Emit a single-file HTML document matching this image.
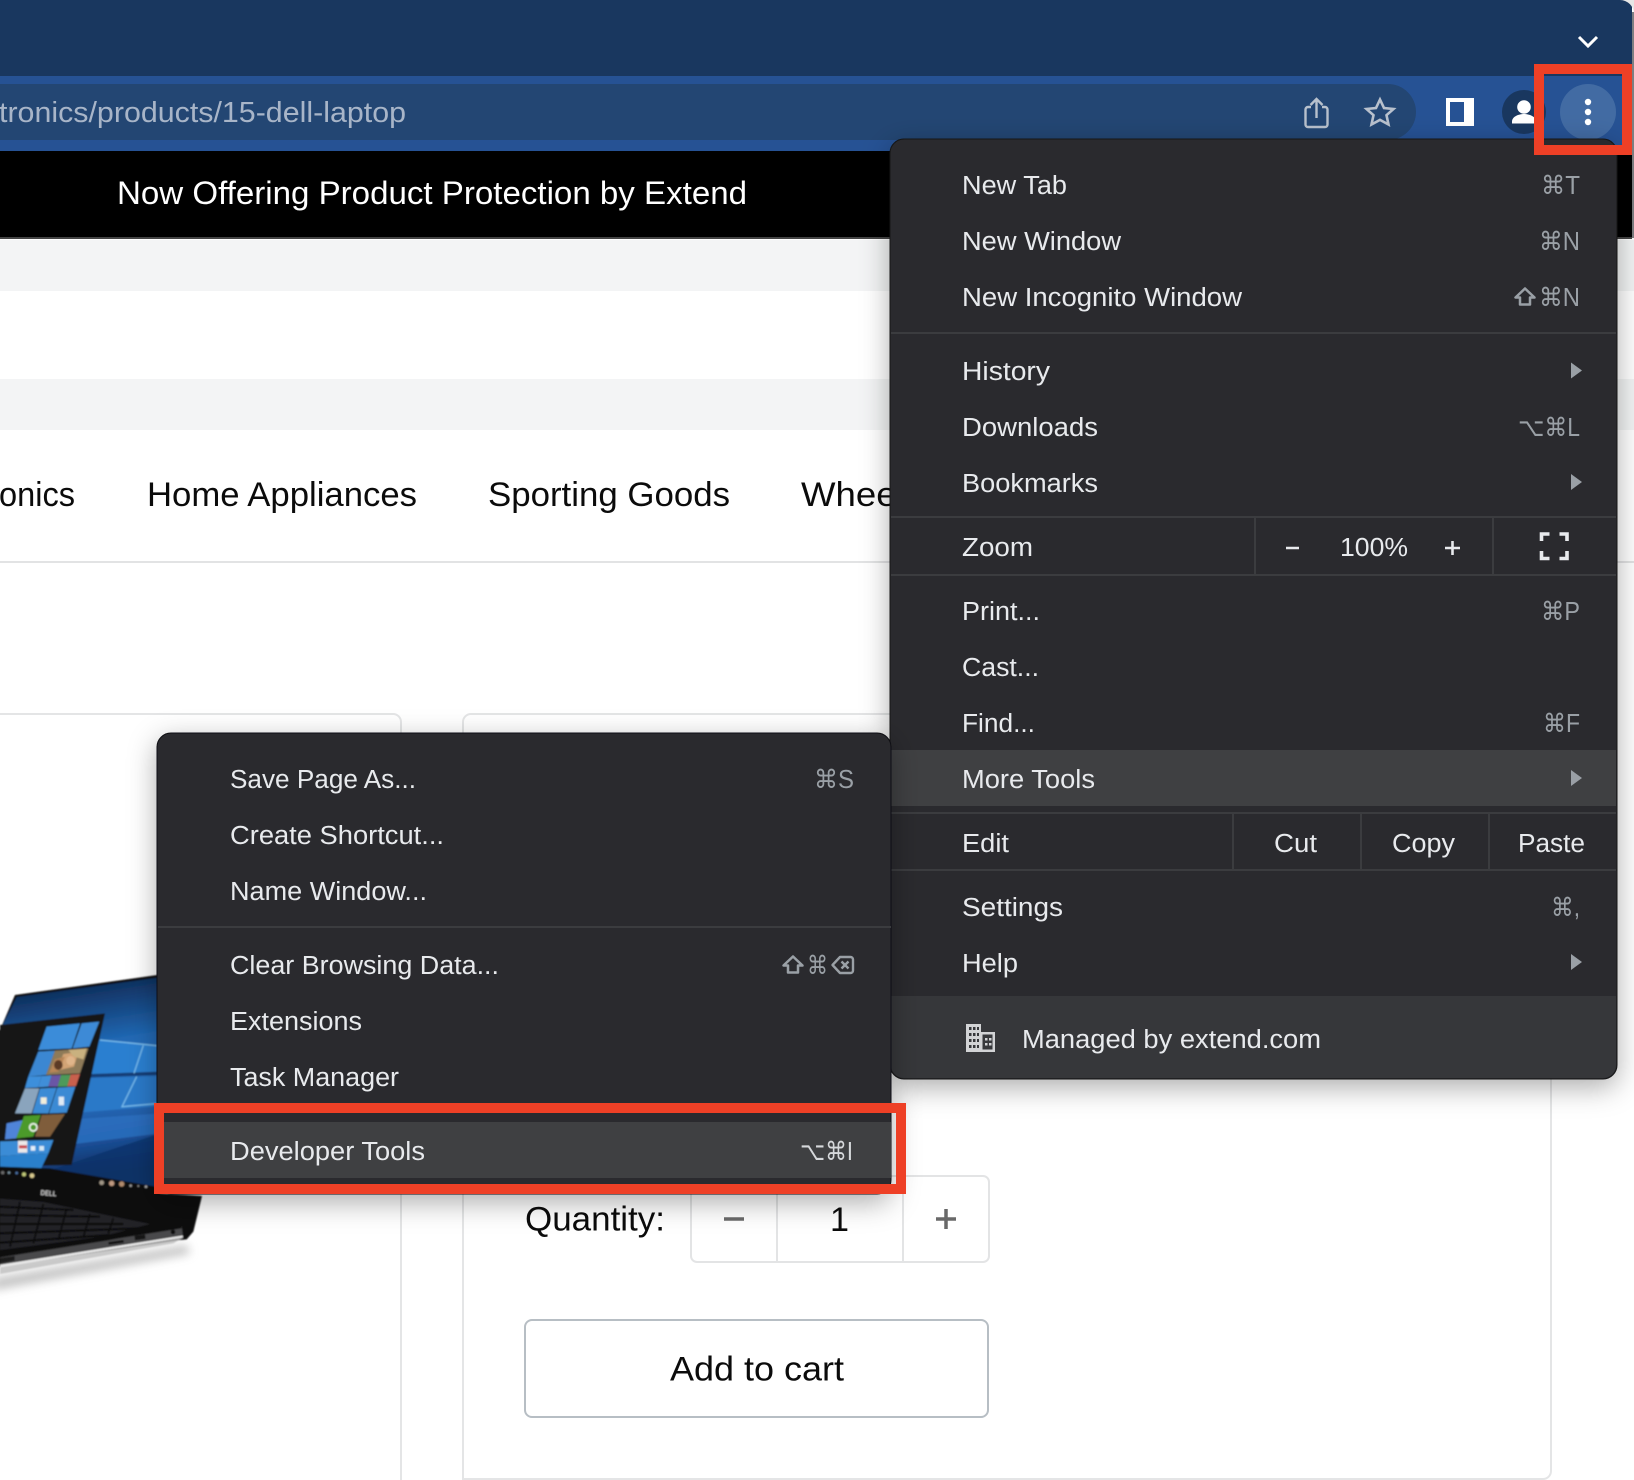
<!DOCTYPE html>
<html lang="en">
<head>
<meta charset="utf-8">
<title>Chrome menu - More Tools - Developer Tools</title>
<style>
html,body{margin:0;padding:0;background:#fff;width:1634px;height:1480px;overflow:hidden}
svg{display:block;position:absolute;left:0;top:0}
text{font-family:"Liberation Sans","DejaVu Sans",sans-serif}
.m{font-size:25.5px;fill:#e8eaed}
.s{font-size:25.5px;fill:#9aa0a6}
.p{font-size:34px;fill:#0b0b0b}
</style>
</head>
<body>
<svg width="1634" height="1480" viewBox="0 0 1634 1480" xmlns="http://www.w3.org/2000/svg">
<defs>
<filter id="sh" x="-15%" y="-15%" width="130%" height="130%"><feDropShadow dx="0" dy="8" stdDeviation="14" flood-color="#000" flood-opacity=".32"/></filter>
<filter id="b1" x="-5%" y="-5%" width="110%" height="110%"><feGaussianBlur stdDeviation="2.6"/></filter>
<filter id="b2" x="-20%" y="-50%" width="140%" height="200%"><feGaussianBlur stdDeviation="14"/></filter>
<filter id="b3" x="-30%" y="-30%" width="160%" height="160%"><feGaussianBlur stdDeviation="22"/></filter>
<linearGradient id="wall" x1="0" y1="0" x2="0.12" y2="1"><stop offset="0" stop-color="#0b2040"/><stop offset=".16" stop-color="#123a6e"/><stop offset=".38" stop-color="#2068b4"/><stop offset=".62" stop-color="#2a70c0"/><stop offset=".85" stop-color="#1a4d94"/><stop offset="1" stop-color="#0e2c5c"/></linearGradient>
<clipPath id="footclip"><path d="M891 996H1616V1065a13 13 0 0 1-13 13H904a13 13 0 0 1-13-13Z"/></clipPath>
</defs>

<!-- page -->
<rect width="1634" height="1480" fill="#fff"/>
<rect y="240" width="1634" height="51" fill="#f3f4f5"/>
<rect y="379" width="1634" height="51" fill="#f3f4f5"/>
<rect y="561" width="1634" height="2" fill="#e2e3e4"/>

<text class="p" x="-1" y="506" textLength="76" lengthAdjust="spacingAndGlyphs">onics</text>
<text class="p" x="147" y="506" textLength="270" lengthAdjust="spacingAndGlyphs">Home Appliances</text>
<text class="p" x="488" y="506" textLength="242" lengthAdjust="spacingAndGlyphs">Sporting Goods</text>
<text class="p" x="801" y="506" textLength="122" lengthAdjust="spacingAndGlyphs">Wheels</text>

<!-- cards -->
<path d="M-10 714H393a8 8 0 0 1 8 8V1480" fill="none" stroke="#e4e5e6" stroke-width="2"/>
<path d="M463 1479V722a8 8 0 0 1 8-8H1543a8 8 0 0 1 8 8V1471a8 8 0 0 1-8 8Z" fill="#fff" stroke="#e4e5e6" stroke-width="2"/>

<!-- laptop -->
<g transform="translate(0,900) scale(.33333)">
  <path d="M-20 1135L560 1035 570 1060 -20 1170Z" fill="#8f8f8f" opacity=".55" filter="url(#b2)"/>
  <g filter="url(#b1)">
    <!-- body -->
    <path d="M45 285L480 224 480 880 606 888 580 995 560 1018 540 1020 0 1100 -10 1100 -10 390 0 390Z" fill="#0c0c0d"/>
    <!-- wallpaper -->
    <path d="M50 291L480 232 480 862 0 800 0 392Z" fill="url(#wall)"/>
    <!-- panes -->
    <path d="M290 420L480 436 480 524 262 526Z" fill="#2c7fd0"/>
    <path d="M240 536L480 530 480 618 205 640Z" fill="#2b79c8"/>
    <path d="M246 528L480 520" stroke="#123c76" stroke-width="10" fill="none"/>
    <path d="M430 436L402 520M410 530L366 620 480 610M300 420L480 438" stroke="#7cc0ee" stroke-width="3.500" fill="none"/>
    <path d="M190 660L480 640 480 700 160 740Z" fill="#2c70c0" opacity=".8"/>
    <path d="M300 760L480 700 480 862 140 815Z" fill="#0f3269" opacity=".75"/>
    <!-- start menu -->
    <path d="M0 375L315 340 215 795 0 800Z" fill="#141619"/>
    <!-- tiles -->
    <path d="M140 380L240 370 215 445 115 450Z" fill="#3b8cd9"/>
    <path d="M245 370L298 365 268 440 218 445Z" fill="#3c8ad6"/>
    <path d="M115 455L165 452 138 525 85 530Z" fill="#3a87d2"/>
    <path d="M165 452L265 445 240 520 138 525Z" fill="#8e7a58"/>
    <path d="M190 462L235 456 222 500 170 512Z" fill="#d2a374"/>
    <path d="M165 478L195 470 175 515 148 518Z" fill="#b88658"/>
    <path d="M205 450L260 446 250 478 222 470Z" fill="#c9b17f"/>
    <ellipse cx="175" cy="495" rx="13" ry="15" fill="#5b3a26"/>
    <ellipse cx="212" cy="482" rx="13" ry="14" fill="#e0b58a"/>
    <path d="M85 530L125 528 114 562 75 564Z" fill="#3c8fdb"/>
    <path d="M125 528L155 526 145 560 114 562Z" fill="#3f8ed8"/>
    <path d="M155 526L183 525 173 560 145 560Z" fill="#6a57a6"/>
    <path d="M183 525L212 524 202 559 173 560Z" fill="#4e9a5a"/>
    <path d="M212 524L240 522 228 558 202 559Z" fill="#c8604e"/>
    <path d="M75 565L118 565 95 640 45 640Z" fill="#8aa4bd"/>
    <path d="M120 565L170 563 145 640 97 640Z" fill="#3a8bd5"/>
    <path d="M172 563L226 560 200 638 147 640Z" fill="#3a8ad4"/>
    <rect x="122" y="592" width="18" height="20" fill="#f1eeda"/>
    <rect x="176" y="590" width="16" height="26" fill="#dfeaf4"/>
    <path d="M20 670L70 660 48 715 15 718Z" fill="#4f84d8"/>
    <path d="M72 648L122 645 100 710 48 715Z" fill="#4b9a2b"/>
    <circle cx="100" cy="682" r="11" fill="none" stroke="#eef5ea" stroke-width="5"/>
    <path d="M125 645L195 642 150 710 105 710Z" fill="#7f5d3a"/>
    <path d="M0 724L160 720 145 760 0 768Z" fill="#3a8cd6"/>
    <rect x="54" y="722" width="28" height="36" fill="#ece8e8"/>
    <rect x="57" y="736" width="24" height="9" fill="#c8444e"/>
    <path d="M0 768L145 760 122 808 0 808Z" fill="#2c80cc"/>
    <rect x="92" y="738" width="14" height="14" fill="#e4eef8"/>
    <rect x="118" y="738" width="14" height="14" fill="#d4e8f5"/>
    <!-- taskbar band -->
    <path d="M0 800L150 805 480 862 480 900 0 900Z" fill="#0e0e10"/>
    <circle cx="8" cy="818" r="5" fill="#6a6a6a"/><circle cx="27" cy="818" r="4" fill="#78909c"/><circle cx="50" cy="819" r="4" fill="#4a6ea0"/><circle cx="72" cy="823" r="6" fill="#c0c878"/><circle cx="96" cy="827" r="7" fill="#d8c98e"/>
    <circle cx="305" cy="848" r="7" fill="#a09686"/><circle cx="335" cy="850" r="8" fill="#c09a80"/><circle cx="365" cy="852" r="8" fill="#b08a6c"/><circle cx="392" cy="857" r="4" fill="#999"/><circle cx="415" cy="858" r="3" fill="#888"/><circle cx="438" cy="860" r="4" fill="#aaa"/>
    <text x="121" y="885" font-size="22" font-weight="700" fill="#c9c9c9" textLength="48" lengthAdjust="spacingAndGlyphs" transform="rotate(5 121 885)">DELL</text>
    <!-- keyboard -->
    <path d="M0 896L130 906 450 972 305 1010 0 1052Z" fill="#232325"/>
    <path d="M0 920L220 930M0 945L300 950M0 972L370 972M0 1000L420 985M0 1028L330 1005" stroke="#0c0c0d" stroke-width="7" fill="none"/>
    <path d="M60 906L30 1040M130 912L100 1030M200 925L175 1020M270 942L250 1012M340 955L325 1000" stroke="#0c0c0d" stroke-width="6" fill="none"/>
    <!-- front strip -->
    <path d="M0 1072L320 1022 545 978 548 1004 0 1092Z" fill="#4a4a4c"/>
    <path d="M0 1050L310 1010 545 978 545 985 0 1072Z" fill="#0e0e0f"/>
    <path d="M0 1074L44 1068 44 1082 0 1090Z" fill="#1e1e1f"/>
    <path d="M0 1094L548 1006 549 1013 0 1102Z" fill="#e8e8e8"/>
    <path d="M0 1102L549 1013 520 1030 0 1122Z" fill="#bdbdbd" opacity=".8"/>
    <rect x="325" y="1023" width="46" height="8" fill="#101010" transform="rotate(-8 348 1026)"/>
    <rect x="404" y="1006" width="32" height="13" fill="#121212" transform="rotate(-8 419 1012)"/>
    <circle cx="519" cy="996" r="7" fill="#0c0c0c"/>
  </g>
</g>

<!-- quantity -->
<text class="p" x="525" y="1230.500" textLength="140" lengthAdjust="spacingAndGlyphs">Quantity:</text>
<rect x="691" y="1176" width="298" height="86" rx="6" fill="#fff" stroke="#e3e4e5" stroke-width="2"/>
<path d="M777 1176V1262M903 1176V1262" stroke="#e3e4e5" stroke-width="2"/>
<path d="M724 1219H744M936 1219H956M946 1209V1229" stroke="#696969" stroke-width="3.500"/>
<text class="p" x="830" y="1231" textLength="19" lengthAdjust="spacingAndGlyphs">1</text>
<rect x="525" y="1320" width="463" height="97" rx="7" fill="#fff" stroke="#b7bec4" stroke-width="2"/>
<text class="p" x="670" y="1380.500" textLength="174" lengthAdjust="spacingAndGlyphs">Add to cart</text>

<!-- chrome -->
<rect width="1632" height="76" fill="#19375f"/>
<path d="M1620 0a14 14 0 0 1 14 14V0Z" fill="#e6e6e6"/>
<rect y="76" width="1632" height="75" fill="#265294"/>
<rect x="1632" y="12" width="2" height="226" fill="#7d7f82"/>
<path d="M-20 84H1388a28 28 0 0 1 0 56H-20Z" fill="#234673"/>
<rect y="151" width="1632" height="87" fill="#000"/>
<rect y="237" width="1632" height="2" fill="#444"/>
<text x="117" y="204" font-size="32" fill="#fff" textLength="630" lengthAdjust="spacingAndGlyphs">Now Offering Product Protection by Extend</text>
<text x="-1" y="122" font-size="29" fill="#a8b5c8" textLength="407" lengthAdjust="spacingAndGlyphs">tronics/products/15-dell-laptop</text>
<path d="M1579 37L1588 46 1597 37" fill="none" stroke="#fff" stroke-width="3"/>
<!-- share -->
<path d="M1311 107h-3a2.500 2.500 0 0 0-2.500 2.500v15a2.500 2.500 0 0 0 2.500 2.500h17a2.500 2.500 0 0 0 2.500-2.500v-15a2.500 2.500 0 0 0-2.500-2.500h-3M1316.500 118V99.500M1310.500 105l6-6 6 6" fill="none" stroke="#b8c1cd" stroke-width="2.400"/>
<!-- star -->
<path d="M1380 99.500L1384 108 1393.500 109 1386.500 115.200 1388.500 124.500 1380 119.800 1371.500 124.500 1373.500 115.200 1366.500 109 1376 108Z" fill="none" stroke="#b8c1cd" stroke-width="2.600" stroke-linejoin="miter"/>
<!-- side panel -->
<rect x="1446" y="98" width="28" height="28" fill="#fff"/>
<rect x="1450" y="102" width="14" height="20" fill="#265294"/>
<!-- avatar -->
<circle cx="1524" cy="112" r="22" fill="#19375f"/>
<circle cx="1524" cy="107" r="6.800" fill="#fff"/>
<path d="M1512 123.500v-2c0-5 7-7.500 12-7.500s12 2.500 12 7.500v2Z" fill="#fff"/>
<!-- more -->
<circle cx="1588" cy="112" r="28" fill="#426ba3"/>

<!-- main menu -->
<g filter="url(#sh)"><rect x="890" y="139" width="727" height="940" rx="14" fill="#292a2d" stroke="#141416" stroke-width="1"/></g>
<g clip-path="url(#footclip)"><rect x="891" y="996" width="725" height="82" fill="#36373a"/></g>
<rect x="891" y="750" width="725" height="56" fill="#3f4042"/>
<g fill="#3b3c3f">
<rect x="891" y="332" width="725" height="2"/>
<rect x="891" y="516" width="725" height="2"/>
<rect x="891" y="574" width="725" height="2"/>
<rect x="891" y="812" width="725" height="2"/>
<rect x="891" y="869" width="725" height="2"/>
<rect x="1254" y="517" width="2" height="58"/>
<rect x="1492" y="517" width="2" height="58"/>
<rect x="1232" y="813" width="2" height="57"/>
<rect x="1360" y="813" width="2" height="57"/>
<rect x="1488" y="813" width="2" height="57"/>
</g>
<text class="m" x="962" y="194" textLength="105" lengthAdjust="spacingAndGlyphs">New Tab</text>
<text class="m" x="962" y="250" textLength="159" lengthAdjust="spacingAndGlyphs">New Window</text>
<text class="m" x="962" y="306" textLength="280" lengthAdjust="spacingAndGlyphs">New Incognito Window</text>
<text class="m" x="962" y="380" textLength="88" lengthAdjust="spacingAndGlyphs">History</text>
<text class="m" x="962" y="436" textLength="136" lengthAdjust="spacingAndGlyphs">Downloads</text>
<text class="m" x="962" y="492" textLength="136" lengthAdjust="spacingAndGlyphs">Bookmarks</text>
<text class="m" x="962" y="556" textLength="71" lengthAdjust="spacingAndGlyphs">Zoom</text>
<text class="m" x="962" y="620" textLength="78" lengthAdjust="spacingAndGlyphs">Print...</text>
<text class="m" x="962" y="676" textLength="77" lengthAdjust="spacingAndGlyphs">Cast...</text>
<text class="m" x="962" y="732" textLength="73" lengthAdjust="spacingAndGlyphs">Find...</text>
<text class="m" x="962" y="788" textLength="133" lengthAdjust="spacingAndGlyphs">More Tools</text>
<text class="m" x="962" y="852" textLength="47" lengthAdjust="spacingAndGlyphs">Edit</text>
<text class="m" x="962" y="916" textLength="101" lengthAdjust="spacingAndGlyphs">Settings</text>
<text class="m" x="962" y="972" textLength="56" lengthAdjust="spacingAndGlyphs">Help</text>
<text class="m" x="1022" y="1048" textLength="299" lengthAdjust="spacingAndGlyphs">Managed by extend.com</text>
<text class="m" x="1340" y="556" textLength="68" lengthAdjust="spacingAndGlyphs">100%</text>
<path d="M1286 548H1299M1445 548H1460M1452.500 541V555" stroke="#e8eaed" stroke-width="2.600"/>
<text class="m" x="1274" y="852" textLength="43" lengthAdjust="spacingAndGlyphs">Cut</text>
<text class="m" x="1392" y="852" textLength="63" lengthAdjust="spacingAndGlyphs">Copy</text>
<text class="m" x="1518" y="852" textLength="67" lengthAdjust="spacingAndGlyphs">Paste</text>
<text class="s" x="1541" y="194" textLength="39" lengthAdjust="spacingAndGlyphs">⌘T</text>
<text class="s" x="1539" y="250" textLength="41" lengthAdjust="spacingAndGlyphs">⌘N</text>
<text class="s" x="1539" y="306" textLength="41" lengthAdjust="spacingAndGlyphs">⌘N</text>
<path d="M1525 288.500L1515.500 297.500H1520V304.500H1530V297.500H1534.500Z" fill="none" stroke="#9aa0a6" stroke-width="2.500" stroke-linejoin="round"/>
<text class="s" x="1518" y="436" textLength="62" lengthAdjust="spacingAndGlyphs">⌥⌘L</text>
<text class="s" x="1541" y="620" textLength="39" lengthAdjust="spacingAndGlyphs">⌘P</text>
<text class="s" x="1543" y="732" textLength="37" lengthAdjust="spacingAndGlyphs">⌘F</text>
<text class="s" x="1551" y="916" textLength="29" lengthAdjust="spacingAndGlyphs">⌘,</text>
<g fill="#9aa0a6">
<path d="M1571 362.500L1582 370.500 1571 378.500Z"/>
<path d="M1571 474L1582 482 1571 490Z"/>
<path d="M1571 770L1582 778 1571 786Z"/>
<path d="M1571 954L1582 962 1571 970Z"/>
</g>
<path d="M1541.500 541V534H1549.500M1559.500 534H1567V541M1567 551V558.500H1559.500M1549.500 558.500H1541.500V551" fill="none" stroke="#e8eaed" stroke-width="3.600"/>
<!-- building icon -->
<path d="M966 1052V1024H981V1032H995V1052Z" fill="#d2d3d5"/>
<g fill="#36373a">
<path d="M969 1027h2.500v3h-2.500zM973 1027h2.500v3h-2.500zM977 1027h2v3h-2zM969 1033h2.500v3h-2.500zM973 1033h2.500v3h-2.500zM977 1033h2v3h-2zM969 1039h2.500v3h-2.500zM973 1039h2.500v3h-2.500zM977 1039h2v3h-2zM969 1045h2.500v3h-2.500zM973 1045h2.500v3h-2.500zM977 1045h2v3h-2z"/>
<path d="M982.500 1034.500h10v15h-10z"/>
</g>
<path d="M985 1038h2.500v2.500h-2.500zM989 1038h2.500v2.500h-2.500zM985 1043h2.500v2.500h-2.500zM989 1043h2.500v2.500h-2.500z" fill="#d2d3d5"/>

<!-- submenu -->
<g filter="url(#sh)"><rect x="157" y="733" width="734" height="461" rx="14" fill="#292a2d" stroke="#101012" stroke-width="1"/></g>
<rect x="158" y="926" width="733" height="2" fill="#3b3c3f"/>
<rect x="158" y="1122" width="733" height="56" fill="#3f4042"/>
<text class="m" x="230" y="788" textLength="186" lengthAdjust="spacingAndGlyphs">Save Page As...</text>
<text class="m" x="230" y="844" textLength="214" lengthAdjust="spacingAndGlyphs">Create Shortcut...</text>
<text class="m" x="230" y="900" textLength="197" lengthAdjust="spacingAndGlyphs">Name Window...</text>
<text class="m" x="230" y="974" textLength="269" lengthAdjust="spacingAndGlyphs">Clear Browsing Data...</text>
<text class="m" x="230" y="1030" textLength="132" lengthAdjust="spacingAndGlyphs">Extensions</text>
<text class="m" x="230" y="1086" textLength="169" lengthAdjust="spacingAndGlyphs">Task Manager</text>
<text class="m" x="230" y="1160" textLength="195" lengthAdjust="spacingAndGlyphs">Developer Tools</text>
<text class="s" x="814" y="788" textLength="40" lengthAdjust="spacingAndGlyphs">⌘S</text>
<text class="s" x="807" y="974" textLength="21" lengthAdjust="spacingAndGlyphs">⌘</text>
<path d="M793 956.500L783.500 965.500H788V972.500H798V965.500H802.500Z" fill="none" stroke="#9aa0a6" stroke-width="2.500" stroke-linejoin="round"/>
<path d="M840 957H850.500a2.500 2.500 0 0 1 2.500 2.500v11a2.500 2.500 0 0 1-2.500 2.500H840L832.500 965ZM841.500 961.500L848.500 968.500M848.500 961.500L841.500 968.500" fill="none" stroke="#9aa0a6" stroke-width="2.400" stroke-linejoin="round"/>
<text class="s" x="800" y="1160" textLength="53" lengthAdjust="spacingAndGlyphs" style="fill:#d6d8db">⌥⌘I</text>

<!-- red highlight boxes -->
<path d="M154 1103H906V1194H154ZM164 1113V1184H896V1113Z" fill="#ee4026" fill-rule="evenodd"/>
<path d="M1534 64H1632V155H1534ZM1544 74V145H1622V74Z" fill="#ee4026" fill-rule="evenodd"/>
<g fill="#fff"><circle cx="1588" cy="102" r="3.200"/><circle cx="1588" cy="112" r="3.200"/><circle cx="1588" cy="122" r="3.200"/></g>
</svg>
</body>
</html>
